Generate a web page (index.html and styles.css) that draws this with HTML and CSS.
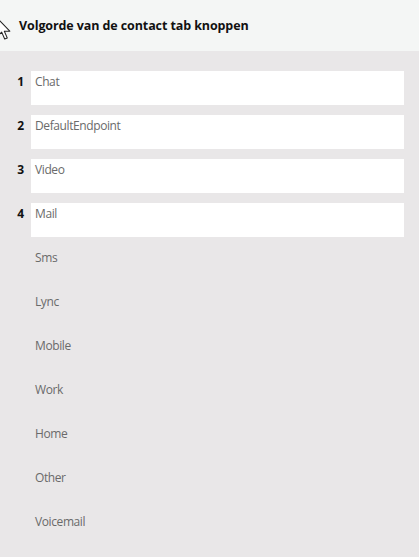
FILE: index.html
```html
<!DOCTYPE html>
<html>
<head>
<meta charset="utf-8">
<link rel="stylesheet" href="styles.css">
</head>
<body>
<div class="header">
  <h1 class="title">Volgorde van de contact tab knoppen</h1>
  <svg class="cursor" width="14" height="22" viewBox="0 0 12 19"><path d="M0.5 0.5 L0.5 15.5 L4 12.2 L6.6 18.2 L8.8 17.2 L6.3 11.4 L11 11.4 Z" fill="#fff" stroke="#222" stroke-width="0.9" stroke-linejoin="round"/></svg>
</div>
<ol class="list">
  <li class="row"><span class="num">1</span><span class="box">Chat</span></li>
  <li class="row"><span class="num">2</span><span class="box">DefaultEndpoint</span></li>
  <li class="row"><span class="num">3</span><span class="box">Video</span></li>
  <li class="row"><span class="num">4</span><span class="box">Mail</span></li>
  <li class="row"><span class="num"></span><span class="box plain">Sms</span></li>
  <li class="row"><span class="num"></span><span class="box plain">Lync</span></li>
  <li class="row"><span class="num"></span><span class="box plain">Mobile</span></li>
  <li class="row"><span class="num"></span><span class="box plain">Work</span></li>
  <li class="row"><span class="num"></span><span class="box plain">Home</span></li>
  <li class="row"><span class="num"></span><span class="box plain">Other</span></li>
  <li class="row"><span class="num"></span><span class="box plain">Voicemail</span></li>
</ol>
</body>
</html>
```
FILE: styles.css
```css
html, body {
  margin: 0;
  padding: 0;
  background: #e9e7e8;
  font-family: "Open Sans", "Noto Sans", sans-serif;
}
.header {
  position: relative;
  height: 51px;
  background: #f4f6f5;
  display: flex;
  align-items: center;
  padding-left: 19px;
}
.title {
  margin: 0;
  font-size: 12.5px;
  font-weight: 700;
  color: #111;
  letter-spacing: -0.1px;
}
.cursor {
  position: absolute;
  left: -3px;
  top: 18px;
}
.list {
  list-style: none;
  margin: 0;
  padding: 20px 15px 0 0;
  display: flex;
  flex-direction: column;
  gap: 10px;
}
.row {
  display: flex;
  height: 34px;
}
.num {
  width: 24px;
  padding-right: 7px;
  text-align: right;
  font-size: 12px;
  font-weight: 700;
  color: #111;
  line-height: 20px;
  padding-top: 1px;
}
.box {
  flex: 1;
  background: #fff;
  padding: 1px 4px 0;
  font-size: 12px;
  font-weight: 400;
  color: #6a6a6a;
  letter-spacing: -0.4px;
  line-height: 20px;
}
.box.plain {
  background: transparent;
}
```
